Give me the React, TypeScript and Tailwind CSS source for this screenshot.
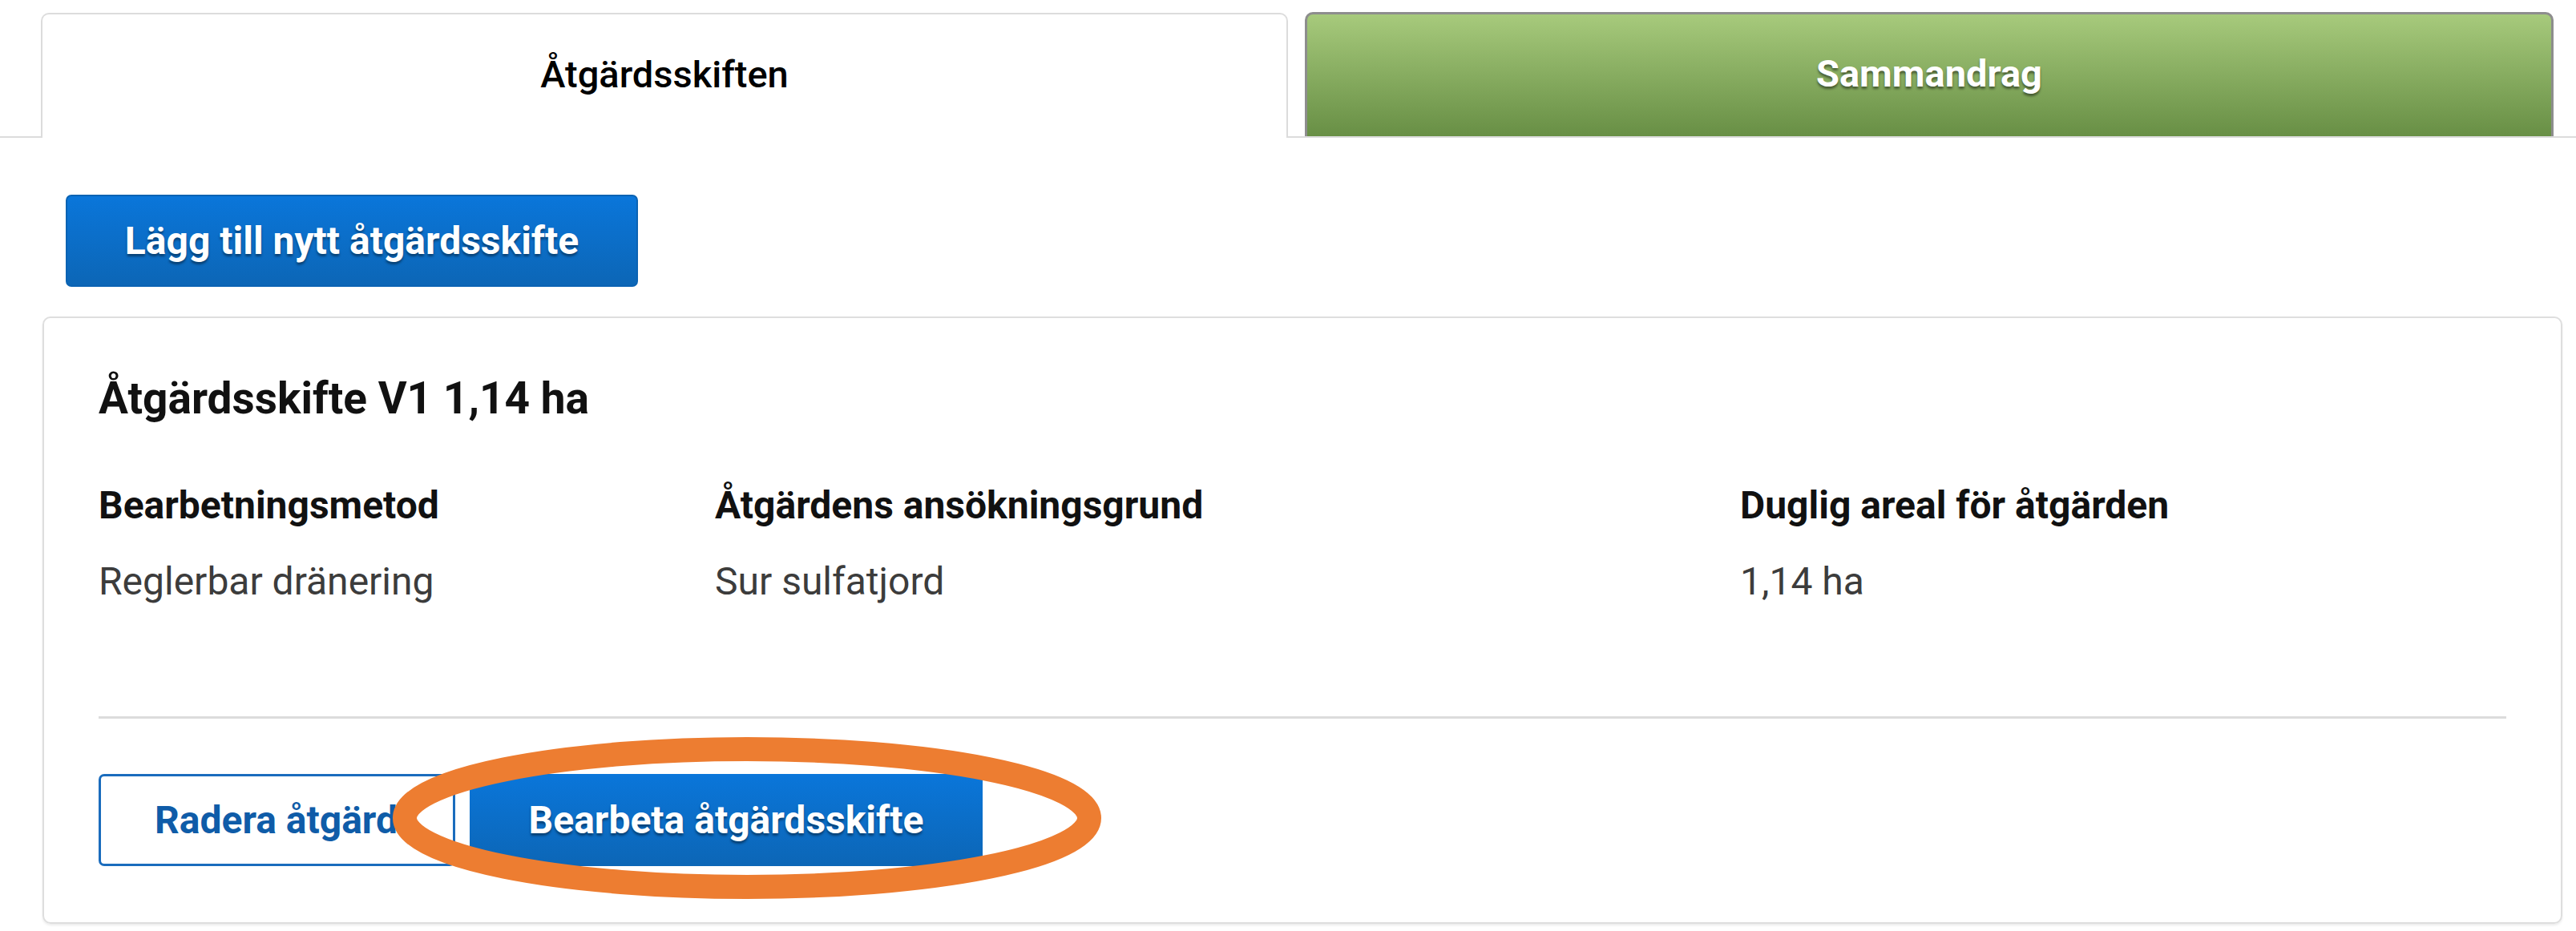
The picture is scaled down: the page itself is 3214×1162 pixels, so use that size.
import React from "react";

const Field = ({ label, value }: { label: string; value: string }) => (
  <div className="flex flex-col">
    <span className="text-[48px] leading-none font-bold text-[#111]">{label}</span>
    <span className="mt-[47px] text-[48px] leading-none text-[#3c3c3c]">{value}</span>
  </div>
);

export default function App() {
  return (
    <div className="relative w-[3214px] h-[1162px] overflow-hidden bg-white font-['Roboto','Liberation_Sans',sans-serif]">
      {/* tabs */}
      <div className="flex items-end pt-[15px] pl-[51px] border-b-2 border-[#dcdcdc]">
        <div className="-mb-[2px] flex h-[156px] w-[1556px] items-center justify-center rounded-t-[10px] border-2 border-b-0 border-[#dcdcdc] bg-white pb-[4px]">
          <span className="text-[47px] font-medium text-black">Åtgärdsskiften</span>
        </div>
        <div className="ml-[21px] flex h-[155px] w-[1558px] items-center justify-center rounded-t-[10px] border-[3px] border-b-0 border-[#8d8d8d] bg-gradient-to-b from-[#a7ca7c] to-[#688f45] pb-[4px]">
          <span className="text-[47px] font-bold text-white [text-shadow:0_3px_3px_rgba(0,0,0,0.45)]">
            Sammandrag
          </span>
        </div>
      </div>

      {/* add button */}
      <div className="pl-[82px] pt-[71px]">
        <button className="flex h-[115px] w-[714px] items-center justify-center rounded-[7px] border-2 border-[#0b63b3] bg-gradient-to-b from-[#0a76da] to-[#0c66b6]">
          <span className="text-[48px] font-bold text-white [text-shadow:0_3px_3px_rgba(0,0,0,0.4)]">
            Lägg till nytt åtgärdsskifte
          </span>
        </button>
      </div>

      {/* card */}
      <div className="ml-[53px] mt-[37px] w-[3144px] rounded-[10px] border-2 border-[#dedede] px-[68px] pt-[73px] pb-[70px] shadow-[0_2px_3px_rgba(0,0,0,0.08)]">
        <h2 className="text-[55px] leading-none font-bold text-[#111]">Åtgärdsskifte V1 1,14 ha</h2>
        <div className="mt-[82px] grid grid-cols-[769px_1279px_1fr]">
          <Field label="Bearbetningsmetod" value="Reglerbar dränering" />
          <Field label="Åtgärdens ansökningsgrund" value="Sur sulfatjord" />
          <Field label="Duglig areal för åtgärden" value="1,14 ha" />
        </div>
        <div className="mt-[144px] h-[3px] bg-[#dcdcdc]" />
        <div className="mt-[69px] flex gap-[18px]">
          <button className="flex h-[115px] w-[445px] items-center overflow-hidden rounded-[7px] border-[3px] border-[#1a6cbd] bg-white pl-[67px]">
            <span className="whitespace-nowrap text-[48px] font-bold text-[#0f5ca8]">Radera åtgärd</span>
          </button>
          <button className="flex h-[115px] w-[640px] items-center justify-center rounded-[3px] bg-gradient-to-b from-[#0a76da] to-[#0c66b6]">
            <span className="text-[48px] font-bold text-white [text-shadow:0_3px_3px_rgba(0,0,0,0.4)]">
              Bearbeta åtgärdsskifte
            </span>
          </button>
        </div>
      </div>

      {/* orange highlight ellipse */}
      <svg className="absolute left-[480px] top-[910px]" width="910" height="225" viewBox="0 0 910 225">
        <ellipse cx="452" cy="111" rx="427" ry="86" fill="none" stroke="#ED7D31" strokeWidth="30" />
      </svg>
    </div>
  );
}
